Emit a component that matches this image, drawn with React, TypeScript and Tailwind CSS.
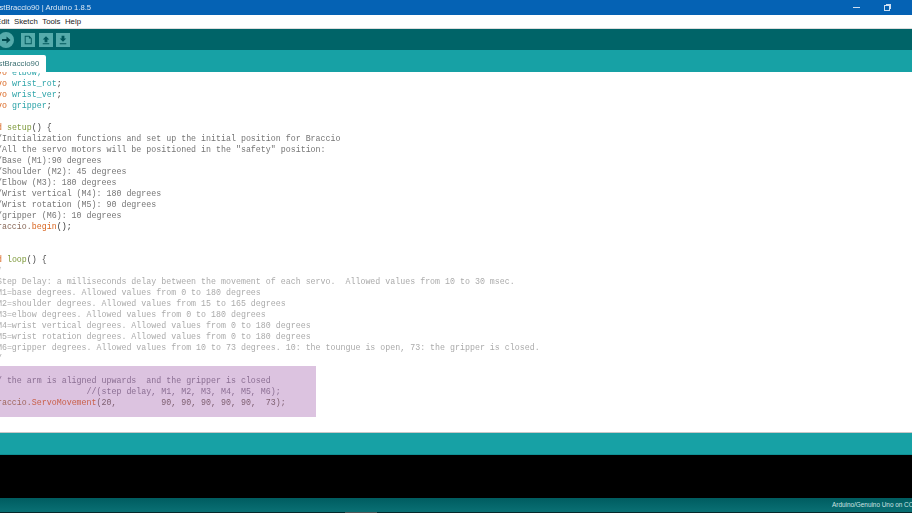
const kw = "text-[#d9651f]"
const ty = "text-[#2ba3a8]"
const cm = "text-[#757575]"
const lt = "text-[#ababab]"
const fn = "text-[#7f9a3c]"
const pu = "text-[#8b6f93]"

type Seg = [string, string]

const lines: Seg[][] = [
  [["Servo ", kw], ["elbow;", ty]],
  [["Servo ", kw], ["wrist_rot", ty], [";", "text-[#333]"]],
  [["Servo ", kw], ["wrist_ver", ty], [";", "text-[#333]"]],
  [["Servo ", kw], ["gripper", ty], [";", "text-[#333]"]],
  [],
  [["void ", kw], ["setup", fn], ["() {", "text-[#444]"]],
  [["  //Initialization functions and set up the initial position for Braccio", cm]],
  [["  //All the servo motors will be positioned in the \"safety\" position:", cm]],
  [["  //Base (M1):90 degrees", cm]],
  [["  //Shoulder (M2): 45 degrees", cm]],
  [["  //Elbow (M3): 180 degrees", cm]],
  [["  //Wrist vertical (M4): 180 degrees", cm]],
  [["  //Wrist rotation (M5): 90 degrees", cm]],
  [["  //gripper (M6): 10 degrees", cm]],
  [["  Braccio.", "text-[#8a6a5a]"], ["begin", kw], ["();", "text-[#333]"]],
  [],
  [],
  [["void ", kw], ["loop", fn], ["() {", "text-[#444]"]],
  [["  /*", lt]],
  [["   Step Delay: a milliseconds delay between the movement of each servo.  Allowed values from 10 to 30 msec.", lt]],
  [["   M1=base degrees. Allowed values from 0 to 180 degrees", lt]],
  [["   M2=shoulder degrees. Allowed values from 15 to 165 degrees", lt]],
  [["   M3=elbow degrees. Allowed values from 0 to 180 degrees", lt]],
  [["   M4=wrist vertical degrees. Allowed values from 0 to 180 degrees", lt]],
  [["   M5=wrist rotation degrees. Allowed values from 0 to 180 degrees", lt]],
  [["   M6=gripper degrees. Allowed values from 10 to 73 degrees. 10: the toungue is open, 73: the gripper is closed.", lt]],
  [["  */", lt]],
]

const picked: Seg[][] = [
  [["  // the arm is aligned upwards  and the gripper is closed", pu]],
  [["                     //(step delay, M1, M2, M3, M4, M5, M6);", pu]],
  [["  Braccio.", "text-[#a0685f]"], ["ServoMovement", "text-[#c9604a]"], ["(20,         90, 90, 90, 90, 90,  73);", "text-[#7d5f70]"]],
]

function Line({ segs }: { segs: Seg[] }) {
  return (
    <div className="h-[11px] whitespace-pre leading-[11px]">
      {segs.map((s, i) => (
        <span key={i} className={s[1]}>{s[0]}</span>
      ))}
    </div>
  )
}

function ToolBtn({ d }: { d: string }) {
  return (
    <div className="h-[14px] w-[14px] bg-[#55abab]">
      <svg viewBox="0 0 15 15" className="h-[14px] w-[14px]">
        <path d={d} fill="#00585c" />
      </svg>
    </div>
  )
}

export default function App() {
  return (
    <div className="flex h-[513px] w-[912px] flex-col overflow-hidden bg-white font-['Liberation_Sans',sans-serif]">
      {/* title bar */}
      <div className="flex h-[15px] shrink-0 items-center justify-between bg-[#0562b4] pr-[22px] text-[#dbe8f5]">
        <div className="-ml-[7px] text-[7.700px] leading-none blur-[0.2px]">testBraccio90 | Arduino 1.8.5</div>
        <div className="flex items-center gap-[24px]">
          <div className="h-px w-[7px] bg-[#cfe0f2]" />
          <div className="relative h-[6px] w-[6px] border border-[#cfe0f2]">
            <div className="absolute -top-[2px] -right-[2px] h-[5px] w-[5px] border-t border-r border-[#cfe0f2]" />
          </div>
        </div>
      </div>

      {/* menu */}
      <div className="flex h-[14px] shrink-0 items-center gap-[4.500px] border-b border-[#ddd] text-[7.800px] text-[#222]">
        <span className="-ml-[4px]">Edit</span>
        <span>Sketch</span>
        <span>Tools</span>
        <span>Help</span>
      </div>

      {/* toolbar */}
      <div className="flex h-[21px] shrink-0 items-center gap-[3.500px] bg-[#006468]">
        <div className="-ml-[2px] mr-[3.500px] flex h-[16px] w-[16px] items-center justify-center rounded-full bg-[#55abab]">
          <svg viewBox="0 0 16 16" className="h-[16px] w-[16px]">
            <path d="M4 7h4.500V4.500L12.500 8l-4 3.500V9H4z" fill="#00494d" />
          </svg>
        </div>
        <ToolBtn d="M4 3h5l2.500 2.500V12H4zM5 4v7h5.500V6H8.500V4z" />
        <ToolBtn d="M7.500 3.500 11 7H9v3H6V7H4zM4 11h7v1H4z" />
        <ToolBtn d="M6 3h3v3h2L7.500 9.500 4 6h2zM4 11h7v1H4z" />
      </div>

      {/* tabs */}
      <div className="flex h-[22px] shrink-0 items-end bg-[#17a1a5]">
        <div className="flex h-[17px] w-[46px] items-center overflow-hidden rounded-tr-[2px] bg-white">
          <span className="-ml-[8px] whitespace-pre text-[7.800px] leading-none text-[#3a6f72] blur-[0.2px]">testBraccio90</span>
        </div>
      </div>

      {/* editor */}
      <div className="h-[361px] shrink-0 overflow-hidden border-b border-[#c8c8c8] font-['Liberation_Mono',monospace] text-[8.300px] blur-[0.25px]">
        <div className="-mt-[5px]">
          <div className="-ml-[18px]">
            {lines.map((l, i) => (
              <Line key={i} segs={l} />
            ))}
          </div>
          <div className="mt-[2px] w-[316px] overflow-hidden bg-[#dcc3e0] py-[9px]">
            <div className="-ml-[18px]">
              {picked.map((l, i) => (
                <Line key={i} segs={l} />
              ))}
            </div>
          </div>
        </div>
      </div>

      {/* message bar */}
      <div className="h-[22px] shrink-0 border-b border-[#0f8f93] bg-[#17a1a5]" />

      {/* console */}
      <div className="h-[43px] shrink-0 bg-black" />

      {/* status */}
      <div className="flex h-[14px] shrink-0 items-center overflow-hidden bg-gradient-to-b from-[#005c60] to-[#0a7074] pl-[832px] text-[6.400px] text-[#cfe3e3]">
        <span className="whitespace-pre">Arduino/Genuino Uno on COM3</span>
      </div>

      {/* bottom edge */}
      <div className="h-px shrink-0 bg-[#06282a] pl-[345px]">
        <div className="h-px w-[32px] bg-[#555]" />
      </div>
    </div>
  )
}
